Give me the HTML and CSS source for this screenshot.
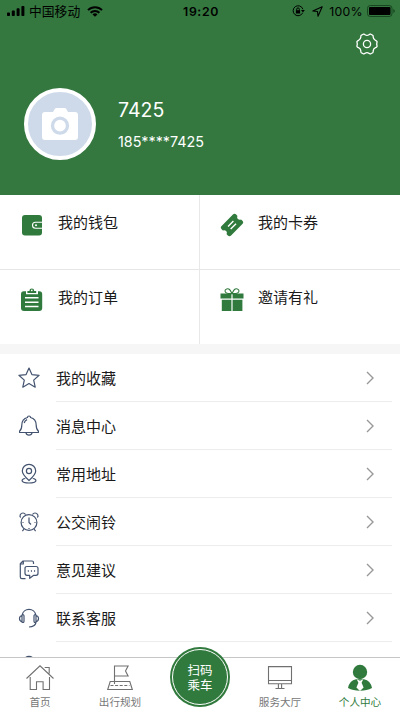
FILE: index.html
```html
<!DOCTYPE html>
<html lang="zh-CN">
<head>
<meta charset="utf-8">
<title>个人中心</title>
<link rel="stylesheet" href="styles.css">
</head>
<body>
<div class="app">
  <header class="header">
    <div class="status">
      <div class="status-left">
        <svg width="18" height="10" viewBox="0 0 18 10"><rect x="0" y="6.4" width="3" height="3.6" rx=".8"/><rect x="4.8" y="4.6" width="3" height="5.4" rx=".8"/><rect x="9.6" y="2.3" width="3" height="7.7" rx=".8"/><rect x="14.4" y="0" width="3" height="10" rx=".8"/></svg>
        <span class="carrier">中国移动</span>
        <svg width="16" height="11" viewBox="0 0 16 11" fill="none" stroke="#000" stroke-width="2"><path d="M1 4.1a10 10 0 0 1 14 0M3.6 6.8a6.3 6.3 0 0 1 8.8 0"/><path d="M8 10.8 5.5 8.4a3.6 3.6 0 0 1 5 0Z" fill="#000" stroke="none"/></svg>
      </div>
      <span class="clock">19:20</span>
      <div class="status-right">
        <svg width="13" height="12" viewBox="0 0 13 12" fill="none" stroke="#000"><path d="M10.7 7.8A5 5 0 1 1 10.9 4.2"/><path d="M9 5h3.8l-1.9 2.6Z" fill="#000" stroke="none"/><rect x="3.9" y="5.2" width="4.2" height="3.3" fill="#000" stroke="none"/><path d="M4.700 5.500V4.200a1.300 1.300 0 0 1 2.600 0v1.300"/></svg>
        <svg class="locate" width="11" height="11" viewBox="0 0 11 11" fill="none" stroke="#000" stroke-width="1.1" stroke-linejoin="round"><path d="M10.200.8 6 10.200 5.500 5.500.8 5Z"/></svg>
        <span class="percent">100%</span>
        <svg width="29" height="12" viewBox="0 0 29 12"><rect x=".5" y=".5" width="24.5" height="11" rx="2.8" fill="none" stroke="#174620"/><rect x="2" y="2" width="21.5" height="8" rx="1"/><path d="M26.3 4v4q1.500-.5 1.500-2t-1.500-2" fill="#174620"/></svg>
      </div>
    </div>
    <div class="toolbar">
      <svg width="22" height="22" viewBox="0 0 22 22" fill="none" stroke="#fff" stroke-width="1.3" stroke-linejoin="round"><path d="M7.2 1.2 Q8.4 .9 9.1 1.7 Q11 3 12.9 1.7 Q13.6 .9 14.8 1.2 L16.7 2.3 Q17.4 3 17.2 4.1 Q17.3 6.3 19.5 7.3 Q20.7 7.7 21.1 8.8 Q20.300 11 21.100 13.200 Q20.7 14.3 19.5 14.7 Q17.3 15.7 17.2 17.9 Q17.4 19 16.7 19.7 L14.8 20.8 Q13.6 21.1 12.9 20.3 Q11 19 9.1 20.3 Q8.4 21.1 7.2 20.8 L5.3 19.7 Q4.6 19 4.8 17.9 Q4.7 15.7 2.5 14.7 Q1.3 14.3 .9 13.2 Q1.700 11 .9 8.800 Q1.3 7.7 2.5 7.3 Q4.7 6.3 4.8 4.1 Q4.6 3 5.3 2.3Z"/><circle cx="11" cy="11" r="3.6"/></svg>
    </div>
    <div class="profile">
      <div class="avatar">
        <svg width="36" height="34" viewBox="0 0 36 34"><path d="M3 5h8l2-3.500Q13.500 1 14.500 1h8q1 0 1.500.5L26 5h7q3 0 3 3v22q0 3-3 3H3q-3 0-3-3V8q0-3 3-3" fill="#fff"/><circle cx="18" cy="18.700" r="7.500" fill="none" stroke="#cedaea" stroke-width="3.300"/></svg>
      </div>
      <div class="who">
        <div class="name">7425</div>
        <div class="phone">185****7425</div>
      </div>
    </div>
  </header>

  <section class="grid">
    <div class="cell">
      <svg width="24" height="24" viewBox="0 0 24 24"><rect x="2" y="2" width="20" height="20.5" rx="3" fill="#317a3d"/><path d="M22 9.200h-6.500a3 3 0 0 0 0 6H22" fill="none" stroke="#fff" stroke-width="1.1"/><circle cx="16" cy="12.200" r="1" fill="#fff"/></svg>
      <span>我的钱包</span>
    </div>
    <div class="cell">
      <svg width="24" height="24" viewBox="0 0 24 24"><g transform="rotate(-45 12 12)"><path d="M4 5.300h16q2.300 0 2.300 2.300v1.900a2.600 2.600 0 0 0 0 5v1.900q0 2.300-2.300 2.300H4q-2.300 0-2.300-2.300v-1.900a2.600 2.600 0 0 0 0-5V7.600q0-2.300 2.300-2.300" fill="#317a3d"/><path d="M8.200 10.200h7.600M8.200 13.900h7.600" stroke="#fff" stroke-width="1.400"/></g></svg>
      <span>我的卡券</span>
    </div>
    <div class="cell">
      <svg width="24" height="24" viewBox="0 0 24 24"><path d="M3.800 3.300H6v2.900h12V3.300h1.400q2.800 0 2.800 3V20q0 3-3 3H4q-3 0-3-3V6.300q0-3 2.800-3" fill="#317a3d"/><path d="M7.400 5V2.900h2a2.400 2.400 0 0 1 4.800 0h2V5Z" fill="#317a3d"/><circle cx="11.800" cy="2.300" r=".9" fill="#fff"/><path d="M5 9.800h13.500M5 14.200h13.500M5 18.500h13.500" stroke="#fff" stroke-width="1.500"/></svg>
      <span>我的订单</span>
    </div>
    <div class="cell">
      <svg width="24" height="24" viewBox="0 0 24 24" fill="#317a3d"><path d="M.5 5.500H11.400V10.500H.5ZM12.600 5.500H23.500V10.500H12.600ZM1.800 11.700h9.600V23H1.800ZM12.600 11.700h9.800V23h-9.800Z"/><path d="M12 5.500C8 6 5 5 5 3S8 0 9.500 1.500 11 4 12 5.500C13 4 13 3 14.500 1.500S19 1 19 3s-3 3-7 2.500Z" fill="#fff" stroke="#317a3d" stroke-width="1.100"/></svg>
      <span>邀请有礼</span>
    </div>
  </section>

  <main class="list">
    <div class="row">
      <svg class="icon" viewBox="0 0 22 22"><path d="m11 1 2.900 6.600 7.200.7-5.400 4.800 1.500 7.100-6.200-3.600-6.200 3.600 1.500-7.100L.9 8.300l7.200-.7Z"/></svg>
      <div class="body"><span>我的收藏</span><svg class="chevron" viewBox="0 0 8 14"><path d="m1 1 6 6-6 6"/></svg></div>
    </div>
    <div class="row">
      <svg class="icon" viewBox="0 0 22 22"><path d="M9.500 2.500a1.500 1.500 0 0 1 3 0c4 1 5.700 3.700 5.700 7.500 0 3.500.7 5 2.200 6.100v1.400H1.600v-1.400C3.100 15 3.800 13.500 3.800 10c0-3.800 1.700-6.500 5.700-7.500ZM8 17.800c.5 3 5.500 3 6 0M6.200 8q.6-2.600 2.900-3.400"/></svg>
      <div class="body"><span>消息中心</span><svg class="chevron" viewBox="0 0 8 14"><path d="m1 1 6 6-6 6"/></svg></div>
    </div>
    <div class="row">
      <svg class="icon" viewBox="0 0 22 22"><path d="M11 17.500Q4.300 11.500 4.300 8a6.700 6.700 0 0 1 13.400 0q0 3.500-6.700 9.500Z"/><circle cx="11" cy="8" r="2.600"/><path d="M7.300 15.500C2.500 16 2.500 20 11 20s8.500-4 3.700-4.500"/></svg>
      <div class="body"><span>常用地址</span><svg class="chevron" viewBox="0 0 8 14"><path d="m1 1 6 6-6 6"/></svg></div>
    </div>
    <div class="row">
      <svg class="icon" viewBox="0 0 22 22"><circle cx="11" cy="11.500" r="7.900"/><path d="M2.700 6.500C1 5 2.500 2 5 2q1.700 0 2.500 1.600M19.300 6.500C21 5 19.500 2 17 2q-1.700 0-2.500 1.600M11 6.500v5l2 2M6 18l-1.600 2.200M16 18l1.600 2.200M4.500 11.500h1M16.500 11.500h1M11 17v1"/></svg>
      <div class="body"><span>公交闹铃</span><svg class="chevron" viewBox="0 0 8 14"><path d="m1 1 6 6-6 6"/></svg></div>
    </div>
    <div class="row">
      <svg class="icon" viewBox="0 0 22 22"><path d="M15.500 5V3.500q0-1.500-1.500-1.500H5L2.300 4.700V18q0 1.700 1.700 1.700h3.500M5.300 2v3H2.500M9 7.500h9q2 0 2 2v4.800q0 2-2 2h-2.300l-4 3v-3H9q-2 0-2-2V9.500q0-2 2-2Z"/><path d="M9.800 12h1.100M12.900 12H14M16 12h1.100" stroke-width="1.600"/></svg>
      <div class="body"><span>意见建议</span><svg class="chevron" viewBox="0 0 8 14"><path d="m1 1 6 6-6 6"/></svg></div>
    </div>
    <div class="row">
      <svg class="icon" viewBox="0 0 22 22"><path d="M4.200 7.800a6.900 6.500 0 0 1 13.600 0M4 8.500Q1.500 9 1.500 11.600T4 14.800M18 8.500q2.500.5 2.500 3.100T18 14.800M4 8q2-.8 2 1v5.200q0 1.800-2 1ZM18 8q-2-.8-2 1v5.200q0 1.800 2 1ZM18 15.500q-1 4.300-7 4.500"/></svg>
      <div class="body"><span>联系客服</span><svg class="chevron" viewBox="0 0 8 14"><path d="m1 1 6 6-6 6"/></svg></div>
    </div>
    <div class="row">
      <svg class="icon" viewBox="0 0 22 22"><circle cx="11" cy="6.800" r="5.300" stroke-width="1.500"/></svg>
      <div class="body"></div>
    </div>
  </main>

  <nav class="tabs">
    <div class="tab">
      <svg width="30" height="28" viewBox="0 0 30 28"><path d="M1.500 14.500 15 1.800l13.500 12.700M5.200 13v12.500h6.300v-7.700h6.600v7.700h6.400V13M19.700 3.500h4.500v6"/></svg>
      <span>首页</span>
    </div>
    <div class="tab">
      <svg width="30" height="28" viewBox="0 0 30 28"><path d="M9.500 20V2h13.600l-2.600 5 2.600 5H9.500M9.500 17.500H5.200L2.700 25.500h24.600l-2.500-8H9.500"/><path d="M5.500 21.500h19" stroke-dasharray="3 1.600"/></svg>
      <span>出行规划</span>
    </div>
    <div class="tab">
      <div class="scan"><div class="ring"><span>扫码</span><span>乘车</span></div></div>
    </div>
    <div class="tab">
      <svg width="30" height="28" viewBox="0 0 30 28"><path d="M3.500 2.600h23v17.200h-23ZM3.500 16.500h23M13.400 20v4M16.600 20v4M10.500 24.500h9"/></svg>
      <span>服务大厅</span>
    </div>
    <div class="tab active">
      <svg width="30" height="28" viewBox="0 0 30 28"><circle cx="15" cy="8" r="7.200"/><path d="M3 24Q4.500 16.500 11 15.300h8q6.500 1.200 8 8.700-5 2.800-12 2.800T3 24Z"/><path d="m11.700 15.300 3.300 1.500 3.300-1.500-1.700 3.500 2 4.700-3.600 3.500-3.600-3.500 2-4.700Z" fill="#fff"/></svg>
      <span>个人中心</span>
    </div>
  </nav>
</div>
</body>
</html>
```
FILE: styles.css
```css
* { box-sizing: border-box; }
body {
  margin: 0;
  font-family: Inter, "Noto Sans CJK SC", sans-serif;
  background: #fff;
}
svg { display: block; flex: none; }
.app {
  width: 400px;
  height: 710px;
  display: flex;
  flex-direction: column;
  overflow: hidden;
}
.header { height: 195px; flex: none; background: #34783f; color: #fff; }
.status {
  height: 22px;
  display: grid;
  grid-template-columns: 1fr auto 1fr;
  align-items: center;
  padding: 0 4px 0 7px;
  color: #000;
  font-size: 12px;
}
.status-left, .status-right { display: flex; align-items: center; }
.status-right { justify-content: flex-end; }
.carrier { margin: 1px 7px 0 4px; font-size: 12.8px; line-height: 20px; }
.clock { margin-left: -1px; font-size: 12.3px; font-weight: 600; letter-spacing: .6px; }
.locate { margin: 0 6px 0 7px; }
.percent { margin-right: 4px; font-size: 12.3px; letter-spacing: .3px; }
.toolbar { height: 44px; display: flex; justify-content: flex-end; align-items: center; padding-right: 22px; }
.profile { display: flex; padding: 22px 24px 0; gap: 22px; }
.avatar {
  width: 72px;
  height: 72px;
  border: 4px solid #fff;
  border-radius: 50%;
  background: #cedaea;
  display: flex;
  align-items: center;
  justify-content: center;
}
.who { padding-top: 10px; }
.name { font-size: 19.5px; line-height: 25px; }
.phone { margin-top: 10px; font-size: 14.3px; line-height: 18px; }

.grid {
  flex: none;
  height: 159px;
  display: grid;
  grid-template-columns: 200px 200px;
  grid-template-rows: 75px 74px;
  border-bottom: 10px solid #f6f6f6;
}
.cell {
  display: flex;
  align-items: flex-start;
  padding: 18px 0 0 20px;
  gap: 14px;
  font-size: 15px;
  line-height: 20px;
  color: #1a1a1a;
}
.cell:nth-child(odd) { border-right: 1px solid #e8e8e8; }
.cell:nth-child(-n+2) { border-bottom: 1px solid #e6e6e6; }

.list { flex: 1; min-height: 0; overflow: hidden; }
.row { height: 48px; display: flex; align-items: center; padding: 0 8px 0 18px; }
.icon { width: 22px; height: 22px; margin-right: 16px; fill: none; stroke: #43536f; stroke-width: 1.2; stroke-linejoin: round; }
.body {
  flex: 1;
  height: 48px;
  display: flex;
  align-items: center;
  justify-content: space-between;
  padding-right: 18px;
  border-bottom: 1px solid #ececec;
  font-size: 15px;
  color: #1a1a1a;
}
.chevron { width: 8px; height: 14px; fill: none; stroke: #999; stroke-width: 1.4; }

.tabs { flex: none; height: 53px; display: flex; border-top: 1px solid #c6c6c6; background: #fff; }
.tab {
  flex: 1;
  display: flex;
  flex-direction: column;
  align-items: center;
  padding-top: 6px;
  font-size: 10.6px;
  line-height: 14px;
  color: #777;
}
.tab > svg { fill: none; stroke: #707070; stroke-width: 1.1; }
.tab > span { margin-top: 4px; }
.active { color: #317a3d; }
.active > svg { fill: #317a3d; stroke: none; }
.scan {
  width: 60px;
  height: 60px;
  flex: none;
  margin-top: -17px;
  padding: 2px;
  border-radius: 50%;
  background: #317a3d;
}
.ring {
  height: 56px;
  padding-top: 2px;
  border: 1.5px solid #fff;
  border-radius: 50%;
  display: flex;
  flex-direction: column;
  align-items: center;
  justify-content: center;
  font-size: 12.5px;
  line-height: 15px;
  color: #fff;
}
```
